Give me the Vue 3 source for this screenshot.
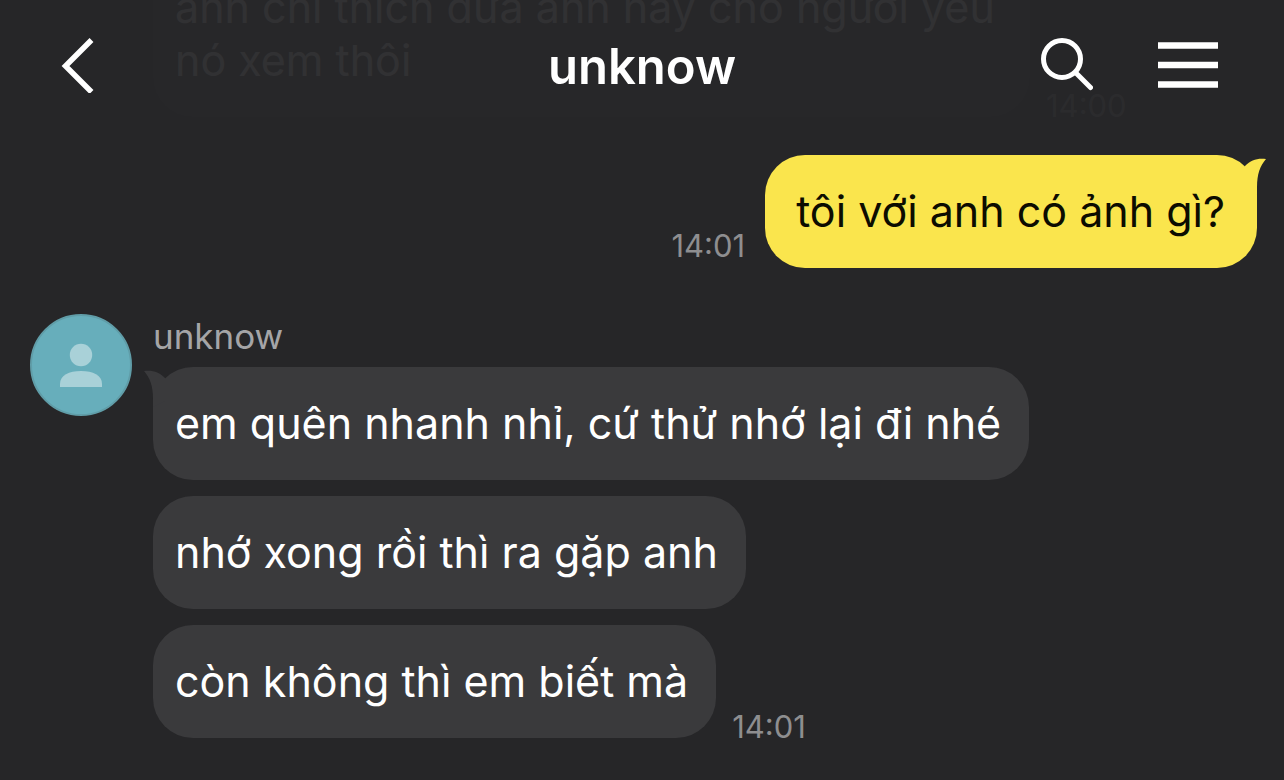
<script setup>
import { ref } from 'vue'

const contact = ref('unknow')

const groups = ref([
  {
    id: 1,
    mine: false,
    scrolled: true,
    time: '14:00',
    messages: ['anh chỉ thích đưa ảnh này cho người yêu nó xem thôi'],
  },
  {
    id: 2,
    mine: true,
    time: '14:01',
    messages: ['tôi với anh có ảnh gì?'],
  },
  {
    id: 3,
    mine: false,
    author: 'unknow',
    time: '14:01',
    messages: [
      'em quên nhanh nhỉ, cứ thử nhớ lại đi nhé',
      'nhớ xong rồi thì ra gặp anh',
      'còn không thì em biết mà',
    ],
  },
])
</script>

<template>
  <div class="chat">
    <header class="chat-header">
      <button class="icon-button" type="button" aria-label="Back">
        <svg width="34" height="56" viewBox="0 0 34 56">
          <path d="M31.5 3 L5.5 29 L31.5 55" fill="none" stroke="currentColor" stroke-width="5.5" />
        </svg>
      </button>

      <h1 class="chat-title">{{ contact }}</h1>

      <div class="chat-actions">
        <button class="icon-button" type="button" aria-label="Search">
          <svg width="52" height="54" viewBox="0 0 52 54">
            <g fill="none" stroke="currentColor" stroke-width="5">
              <circle cx="21" cy="21" r="18.5" />
              <path d="M34.5 34.5 L49.5 49.5" stroke-linecap="round" />
            </g>
          </svg>
        </button>
        <button class="icon-button" type="button" aria-label="Menu">
          <svg width="60" height="46" viewBox="0 0 60 46">
            <path d="M0 3.5 H60 M0 23 H60 M0 42.5 H60" stroke="currentColor" stroke-width="6.5" />
          </svg>
        </button>
      </div>
    </header>

    <main class="messages">
      <section
        v-for="group in groups"
        :key="group.id"
        class="group"
        :class="{ 'group--mine': group.mine }"
      >
        <div v-if="!group.mine" class="avatar-column">
          <svg v-if="group.author" class="avatar" width="102" height="102" viewBox="0 0 102 102">
            <circle cx="51" cy="51" r="50" fill="#67aebb" stroke="#609da8" stroke-width="2" />
            <circle cx="51" cy="41" r="11.2" fill="#a9d1d8" />
            <path d="M30 73 V70 C30 61 39 57 51 57 C63 57 72 61 72 70 V73 Z" fill="#a9d1d8" />
          </svg>
        </div>

        <div class="stack">
          <p v-if="group.author" class="author">{{ group.author }}</p>
          <div v-for="(message, index) in group.messages" :key="index" class="row">
            <div class="bubble">
              <svg
                v-if="index === 0 && !group.scrolled"
                class="tail"
                width="21"
                height="40"
                viewBox="0 0 21 40"
              >
                <path d="M0 11 C6 5 12 3 21 4 C15 11 12 19 12 32 L12 40 L0 34 Z" fill="currentColor" />
              </svg>
              <p class="text">{{ message }}</p>
            </div>
            <time v-if="index === group.messages.length - 1" class="time">{{ group.time }}</time>
          </div>
        </div>
      </section>
    </main>
  </div>
</template>

<style>
body {
  margin: 0;
  background: #262628;
}
</style>

<style scoped>
.chat {
  position: relative;
  display: flex;
  flex-direction: column;
  height: 100vh;
  overflow: hidden;
  background: #262628;
  color: #fff;
  font-family: Inter, 'Liberation Sans', sans-serif;
}

/* translucent bar, older messages slide underneath */
.chat-header {
  position: absolute;
  top: 0;
  right: 0;
  left: 0;
  z-index: 1;
  display: grid;
  grid-template-columns: 1fr auto 1fr;
  align-items: center;
  box-sizing: border-box;
  height: 130px;
  padding: 0 60px;
  background: rgba(38, 38, 40, 0.95);
}

.chat-title {
  margin: 0;
  padding-top: 4px;
  font-size: 49px;
  font-weight: 600;
  line-height: 58px;
}

.chat-actions {
  display: flex;
  align-items: center;
  justify-content: flex-end;
  gap: 65px;
  padding-right: 6px;
}

.icon-button {
  justify-self: start;
  padding: 0;
  border: 0;
  background: none;
  color: #fff;
  cursor: pointer;
}

.icon-button svg {
  display: block;
}

.messages {
  display: flex;
  flex: 1;
  flex-direction: column;
  justify-content: flex-end;
  min-height: 0;
  padding: 0 27px 42px 30px;
}

.group {
  display: flex;
  flex: none;
  align-items: flex-start;
  margin-top: 46px;
}

.group--mine {
  justify-content: flex-end;
  margin-top: 38px;
}

.avatar-column {
  flex: none;
  width: 123px;
}

.avatar {
  display: block;
}

.stack {
  display: flex;
  flex-direction: column;
  gap: 16px;
}

.author {
  margin: 0 0 -7px;
  color: #a5a5a7;
  font-size: 35px;
  line-height: 44px;
}

.row {
  display: flex;
  align-items: flex-end;
  gap: 16px;
}

.group--mine .row {
  flex-direction: row-reverse;
  gap: 20px;
}

.bubble {
  position: relative;
  box-sizing: border-box;
  max-width: 877px;
  padding: 30px 28px 30px 22px;
  border-radius: 40px;
  background: #3a3a3c;
}

.group--mine .bubble {
  padding: 30px 32px 30px 31px;
  background: #fae54d;
}

.tail {
  position: absolute;
  top: 0;
  left: -9px;
  color: #3a3a3c;
  transform: scaleX(-1);
}

.group--mine .tail {
  right: -9px;
  left: auto;
  color: #fae54d;
  transform: none;
}

.text {
  margin: 0;
  font-size: 43px;
  line-height: 53px;
}

.group--mine .text {
  color: #0c0c00;
}

.time {
  margin-bottom: -7px;
  color: #8e8e90;
  font-size: 31px;
  line-height: 36px;
}

.group--mine .time {
  margin-bottom: 4px;
}
</style>
